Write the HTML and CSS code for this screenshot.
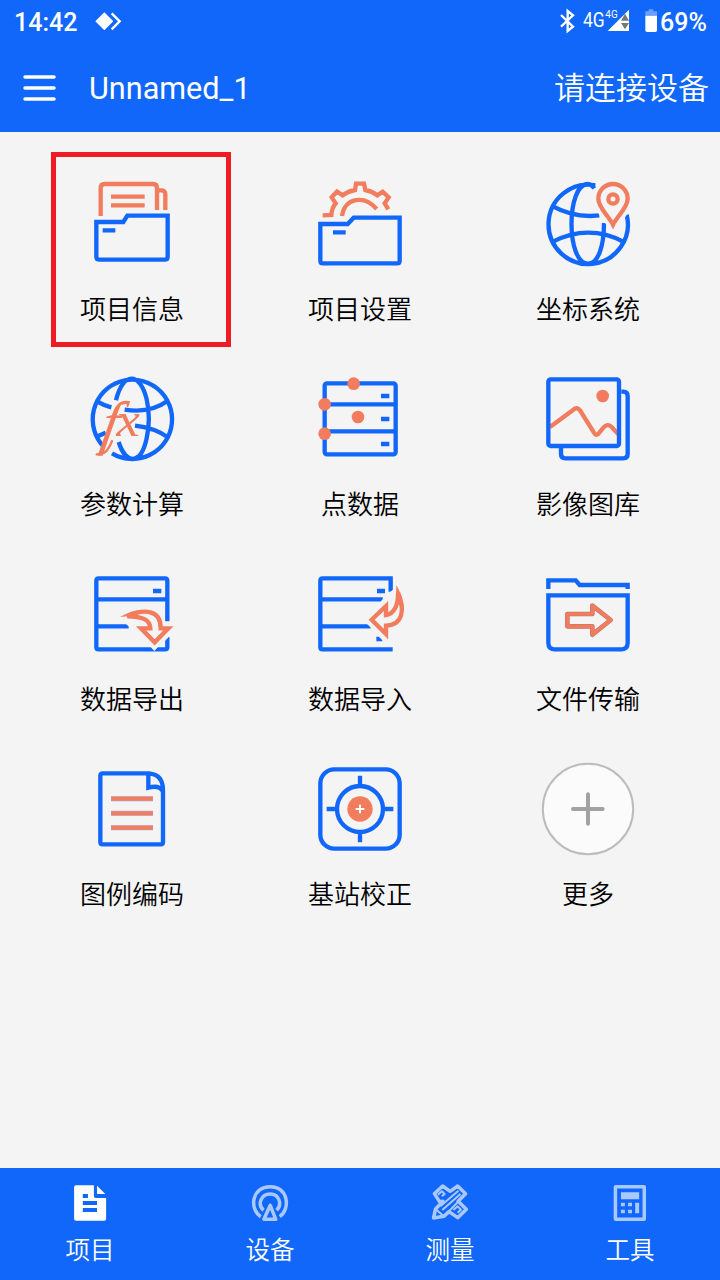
FILE: index.html
```html
<!DOCTYPE html>
<html lang="zh-CN">
<head>
<meta charset="utf-8">
<title>Unnamed_1</title>
<link rel="stylesheet" href="styles.css">
</head>
<body>
<div class="screen">
  <header class="top">
    <div class="status">
      <span class="clock">14:42</span>
      <svg class="share" viewBox="282 33 90 66"><path class="solid" d="M313 37L340 64L313 91L286 64Z"/><path class="chevron" d="M335 40L359 64L335 88"/></svg>
      <svg class="signals" viewBox="45 0 312 132">
        <path class="bt" d="M63 45L99 80L83 93V33L99 46L63 80"/>
        <text class="net" x="129" y="82" font-size="62" textLength="65" lengthAdjust="spacingAndGlyphs">4G</text>
        <text class="net" x="196" y="55" font-size="32" textLength="37" lengthAdjust="spacingAndGlyphs">4G</text>
        <path class="solid" d="M203 93L267 29V93Z"/>
        <path class="updown" d="M243 62L255 41L267 62ZM243 69H267L255 88Z"/>
        <path class="cap" d="M316 34H326V28H340V34H351V47H316Z"/>
        <path class="solid" d="M316 47H351V91Q351 96 346 96H321Q316 96 316 91Z"/>
      </svg>
      <span class="percent">69%</span>
    </div>
    <div class="bar">
      <svg class="menu" viewBox="0 0 34 28"><path d="M3 3H32M3 14H32M3 25H32"/></svg>
      <h1 class="title">Unnamed_1</h1>
      <span class="connect">请连接设备</span>
    </div>
  </header>

  <main class="grid">
    <div class="tile selected">
      <svg class="icon" viewBox="111 87 300 300"><path class="o" d="M167 213V129Q167 117 179 117H324Q336 117 336 129V195M340 136H351Q361 137 361 149V195M198 155H299M198 181H299"/><path class="b" d="M154 231H235L247 212H368V335Q368 344 359 344H164Q154 344 154 335ZM173 256H211"/></svg>
      <span class="label">项目信息</span>
    </div>
    <div class="tile">
      <svg class="icon" viewBox="30 27 300 300"><path class="o" d="M68 151L94 150Q95 130 107 115L95 97L111 80L128 91Q145 78 165 75L168 56H192L196 75Q216 78 232 91L248 80L266 97L254 115L265 133M126 153C134 96 194 90 230 132"/><path class="b" d="M61 177H143L161 158H299V287Q299 295 291 295H69Q61 295 61 287Z M99 202H137"/></svg>
      <span class="label">项目设置</span>
    </div>
    <div class="tile">
      <svg class="icon" viewBox="24 27 300 300"><path class="b" d="M196 61A119 119 0 1 0 290 149M174 57C108 57 108 296 174 296C206 296 222 240 222 174M174 57Q185 58 193 70M69 124Q119 152 181 153L208 151M69 230Q122 203 174 203Q230 203 279 230"/><path class="mask" d="M249 184C232 157 205 132 205 102A44 44 0 0 1 293 102C293 132 266 157 249 184Z"/><path class="o" d="M249 179C236 153 205 128 205 101A44 44 0 0 1 293 101C293 128 262 153 249 179Z"/><circle class="o" cx="249" cy="102" r="14"/></svg>
      <span class="label">坐标系统</span>
    </div>
    <div class="tile">
      <svg class="icon" viewBox="36 12 300 300"><path class="b" d="M101 245A119 119 0 1 1 126 265M138 106C158 20 210 20 230 103Q243 162 230 220C213 300 168 300 146 231M81 109Q101 121 124 127M164 134Q240 146 291 109M80 215L107 203M195 182Q253 189 291 215"/><text class="fx" transform="translate(88 235) skewX(-10)" font-size="180">f</text><path class="tail" d="M126 228Q112 266 90 267L80 268M158 116Q168 109 174 116"/><text class="fx" transform="translate(139 214) scale(1.1 1)" font-size="145">x</text></svg>
      <span class="label">参数计算</span>
    </div>
    <div class="tile">
      <svg class="icon" viewBox="30 12 300 300"><rect class="b" x="74" y="55" width="213" height="213" rx="7"/><path class="b" d="M74 118H287M74 199H287M243 93H268M243 162H268M243 237H268"/><g class="dots"><circle cx="161" cy="56" r="19"/><circle cx="74" cy="118" r="19"/><circle cx="174" cy="156" r="19"/><circle cx="74" cy="206" r="19"/></g></svg>
      <span class="label">点数据</span>
    </div>
    <div class="tile">
      <svg class="icon" viewBox="714 12 300 300"><path class="b" d="M964 80H970Q983 80 983 93V267Q983 280 970 280H796Q783 280 783 267V248"/><path class="o" d="M750 186L819 135Q830 124 840 136L880 200Q889 217 898 203L910 188Q922 174 935 186L955 208"/><rect class="b" x="745" y="43" width="212" height="200" rx="7"/><g class="dots"><circle cx="908" cy="93" r="19"/></g></svg>
      <span class="label">影像图库</span>
    </div>
    <div class="tile">
      <svg class="icon" viewBox="6 -3 300 300"><path class="b" d="M262 169V47Q262 40 255 40H56Q49 40 49 47V246Q49 253 56 253H255Q262 253 262 246V216M49 103H262M219 78H244M49 184H146"/><path class="patch" d="M137 176H153V190ZM253 170H270V176ZM254 229L270 212V206H254ZM212 246L223 258L234 246Z"/><path class="o" d="M142 154C193 130 243 134 242 190H265L224 232L183 190H211C210 164 188 154 142 154Z"/><path class="ofill" d="M120 156Q150 137 185 134L172 151Z"/></svg>
      <span class="label">数据导出</span>
    </div>
    <div class="tile">
      <svg class="icon" viewBox="690 -3 300 300"><path class="b" d="M932 80V40H728Q721 40 721 47V246Q721 253 728 253H938M721 103H908M721 184H872M891 78H915M889 222H907"/><path class="patch" d="M926 84L939 74V85ZM901 110L915 96V112ZM861 177L876 191V176ZM895 214L910 229V214Z"/><path class="o" d="M954 83C975 132 970 180 918 182V207L875 164L918 123V150C943 147 955 120 954 83Z"/><path class="ofill" d="M949 60Q968 92 970 128L957 120L948 107Z"/></svg>
      <span class="label">数据导入</span>
    </div>
    <div class="tile">
      <svg class="icon" viewBox="24 -3 300 300"><path class="b" d="M55 72V46H137L149 60H293V72M55 91H293V233Q293 253 273 253H75Q55 253 55 233Z"/><path class="arrow-edge" d="M112 147H187V122L242 165L187 209V184H112Z"/><path class="arrow" d="M112 147H187V122L242 165L187 209V184H112Z"/></svg>
      <span class="label">文件传输</span>
    </div>
    <div class="tile">
      <svg class="icon" viewBox="6 12 300 300"><path class="b" d="M68 55H207Q249 59 249 105V261Q249 268 242 268H68Q61 268 61 261V62Q61 55 68 55ZM205 55V98Q238 89 249 109"/><path class="lines-edge" d="M93 131H219M93 175H219M93 218H219"/><path class="lines" d="M94 131H218M94 175H218M94 218H218"/></svg>
      <span class="label">图例编码</span>
    </div>
    <div class="tile">
      <svg class="icon" viewBox="690 12 300 300"><rect class="b" x="721" y="43" width="238" height="238" rx="42"/><circle class="b" cx="840" cy="162" r="69"/><path class="b" d="M840 62V92M840 232V262M740 162H770M910 162H940"/><g class="dots"><circle cx="840" cy="162" r="38"/></g><path class="cross" d="M827 162H853M840 149V175"/></svg>
      <span class="label">基站校正</span>
    </div>
    <div class="tile">
      <svg class="icon" viewBox="24 12 300 300"><circle class="more" cx="174" cy="162" r="135.500"/><path class="plus" d="M129 162H218M174 118V206"/></svg>
      <span class="label">更多</span>
    </div>
  </main>

  <nav class="nav">
    <div class="tab active">
      <svg class="tab-icon" preserveAspectRatio="none" viewBox="40.5 57 121.400 144"><path class="solid" fill-rule="evenodd" d="M66 76H111V109Q111 114 116 114H142V177Q142 182 137 182H66Q61 182 61 177V81Q61 76 66 76ZM83 102V114H96V102ZM83 123V135H119V123ZM83 144V156H119V144Z"/><path class="solid" d="M119 77L140 102H119Z"/></svg>
      <span>项目</span>
    </div>
    <div class="tab">
      <svg class="tab-icon" preserveAspectRatio="none" viewBox="495.700 57 121.400 144"><path class="t" d="M533 170C504 148 509 80 557 80C604 80 608 148 581 170M540 151C524 134 533 102 557 102C580 102 588 134 573 151M557 136L571 178H541Z"/></svg>
      <span>设备</span>
    </div>
    <div class="tab">
      <svg class="tab-icon" preserveAspectRatio="none" viewBox="950.900 57 121.400 144"><path class="t" d="M985 125L972 101L993 78L1012 94L1031 78L1051 101L1032 124L1053 148L1031 173L1009 155L996 169L970 174L975 147L994 124Z"/><path class="t thin" d="M975 147L996 169L1049 105M987 139L1033 92M992 150L1038 102M981 104L991 94L998 102L991 109M1020 150L1031 139L1039 149L1031 158"/></svg>
      <span>测量</span>
    </div>
    <div class="tab">
      <svg class="tab-icon" preserveAspectRatio="none" viewBox="1406.200 57 121.400 144"><rect class="t" x="1430" y="80" width="73" height="98" rx="1"/><path class="f" d="M1444 97H1490V118H1444ZM1444 128H1454V139H1444ZM1462 128H1472V139H1462ZM1444 149H1454V160H1444ZM1462 149H1472V160H1462ZM1480 128H1490V160H1480Z"/></svg>
      <span>工具</span>
    </div>
  </nav>
</div>
</body>
</html>
```

FILE: styles.css
```css
*, *::after { box-sizing: border-box; }
body {
  margin: 0;
  font-family: Roboto, "Noto Sans CJK SC", sans-serif;
  background: #f4f4f4;
  color: #000;
}
svg { display: block; flex: none; overflow: visible; }
.screen { width: 720px; height: 1280px; display: flex; flex-direction: column; }

.top { height: 132px; background: #1167f9; color: #fff; }
.status { height: 44px; display: flex; align-items: center; padding: 0 13px 0 14px; }
.clock { width: 80px; font-size: 25px; font-weight: 500; line-height: 44px; padding-top: 2px; }
.share { width: 30px; height: 22px; }
.signals { width: 104px; height: 44px; margin-left: auto; }
.percent { width: 48px; padding: 2px 0 0 1px; font-size: 25px; font-weight: 500; line-height: 44px; white-space: nowrap; }
.solid { fill: #fff; }
.chevron { fill: none; stroke: #fff; stroke-width: 7; }
.bt { fill: none; stroke: #fff; stroke-width: 7; }
.net { fill: #fff; font-family: Roboto, sans-serif; }
.updown { fill: #777; }
.cap { fill: #6b9ffb; }

.bar { height: 88px; display: flex; align-items: center; padding: 0 11px 0 22px; }
.menu { width: 34px; height: 28px; margin: 0 33px 1px 0; }
.menu path { fill: none; stroke: #fff; stroke-width: 3.500; stroke-linecap: round; }
.title { margin: 0; padding-top: 2px; font-size: 30.600px; font-weight: 400; line-height: 88px; }
.connect { margin-left: auto; padding-bottom: 4px; font-size: 31px; font-weight: 350; line-height: 88px; font-family: "Noto Sans CJK SC", sans-serif; }

.grid {
  flex: 1;
  display: grid;
  grid-template-columns: repeat(3, 228px);
  grid-auto-rows: 195px;
  justify-content: center;
  align-content: start;
  padding-top: 20px;
}
.tile { position: relative; display: flex; flex-direction: column; align-items: center; padding-top: 22px; }
.selected::after {
  content: "";
  position: absolute;
  left: 33px;
  top: 0;
  width: 180px;
  height: 195px;
  border: 5px solid #f01c24;
}
.icon { width: 100px; height: 100px; }
.label { margin-top: 15px; font-size: 26px; line-height: 38px; font-weight: 350; font-family: "Noto Sans CJK SC", sans-serif; }

.b, .o { fill: none; stroke-width: 13; }
.b { stroke: #1167f9; }
.o { stroke: #f27c5e; }
.mask { fill: #f4f4f4; stroke: #f4f4f4; stroke-width: 28; }
.patch { fill: #f4f4f4; }
.ofill, .dots { fill: #f27c5e; }
.fx { font-family: "Liberation Serif", serif; font-style: italic; fill: #f27c5e; }
.tail { fill: none; stroke: #f27c5e; stroke-width: 7; stroke-linecap: round; }
.arrow, .arrow-edge { fill: none; stroke-linejoin: round; }
.arrow-edge { stroke: #b6786b; stroke-width: 14; }
.arrow { stroke: #f27c5e; stroke-width: 11; }
.lines, .lines-edge { fill: none; }
.lines-edge { stroke: #b9a0bd; stroke-width: 15; }
.lines { stroke: #f27c5e; stroke-width: 11; }
.cross { fill: none; stroke: #fff; stroke-width: 6; }
.more { fill: #fbfbfb; stroke: #bcbcbc; stroke-width: 6; }
.plus { fill: none; stroke: #a2a2a2; stroke-width: 12; stroke-linecap: round; }

.nav { height: 112px; display: flex; background: #1167f9; color: #fff; }
.tab { flex: 1; display: flex; flex-direction: column; align-items: center; padding-top: 11px; font: 350 24.500px/36px "Noto Sans CJK SC", sans-serif; }
.tab-icon { width: 48px; height: 48px; margin-bottom: 4px; }
.t { fill: none; stroke: #a9c8fd; stroke-width: 3.500px; stroke-linejoin: round; vector-effect: non-scaling-stroke; }
.thin { stroke-width: 2px; }
.f { fill: #a9c8fd; }
```
